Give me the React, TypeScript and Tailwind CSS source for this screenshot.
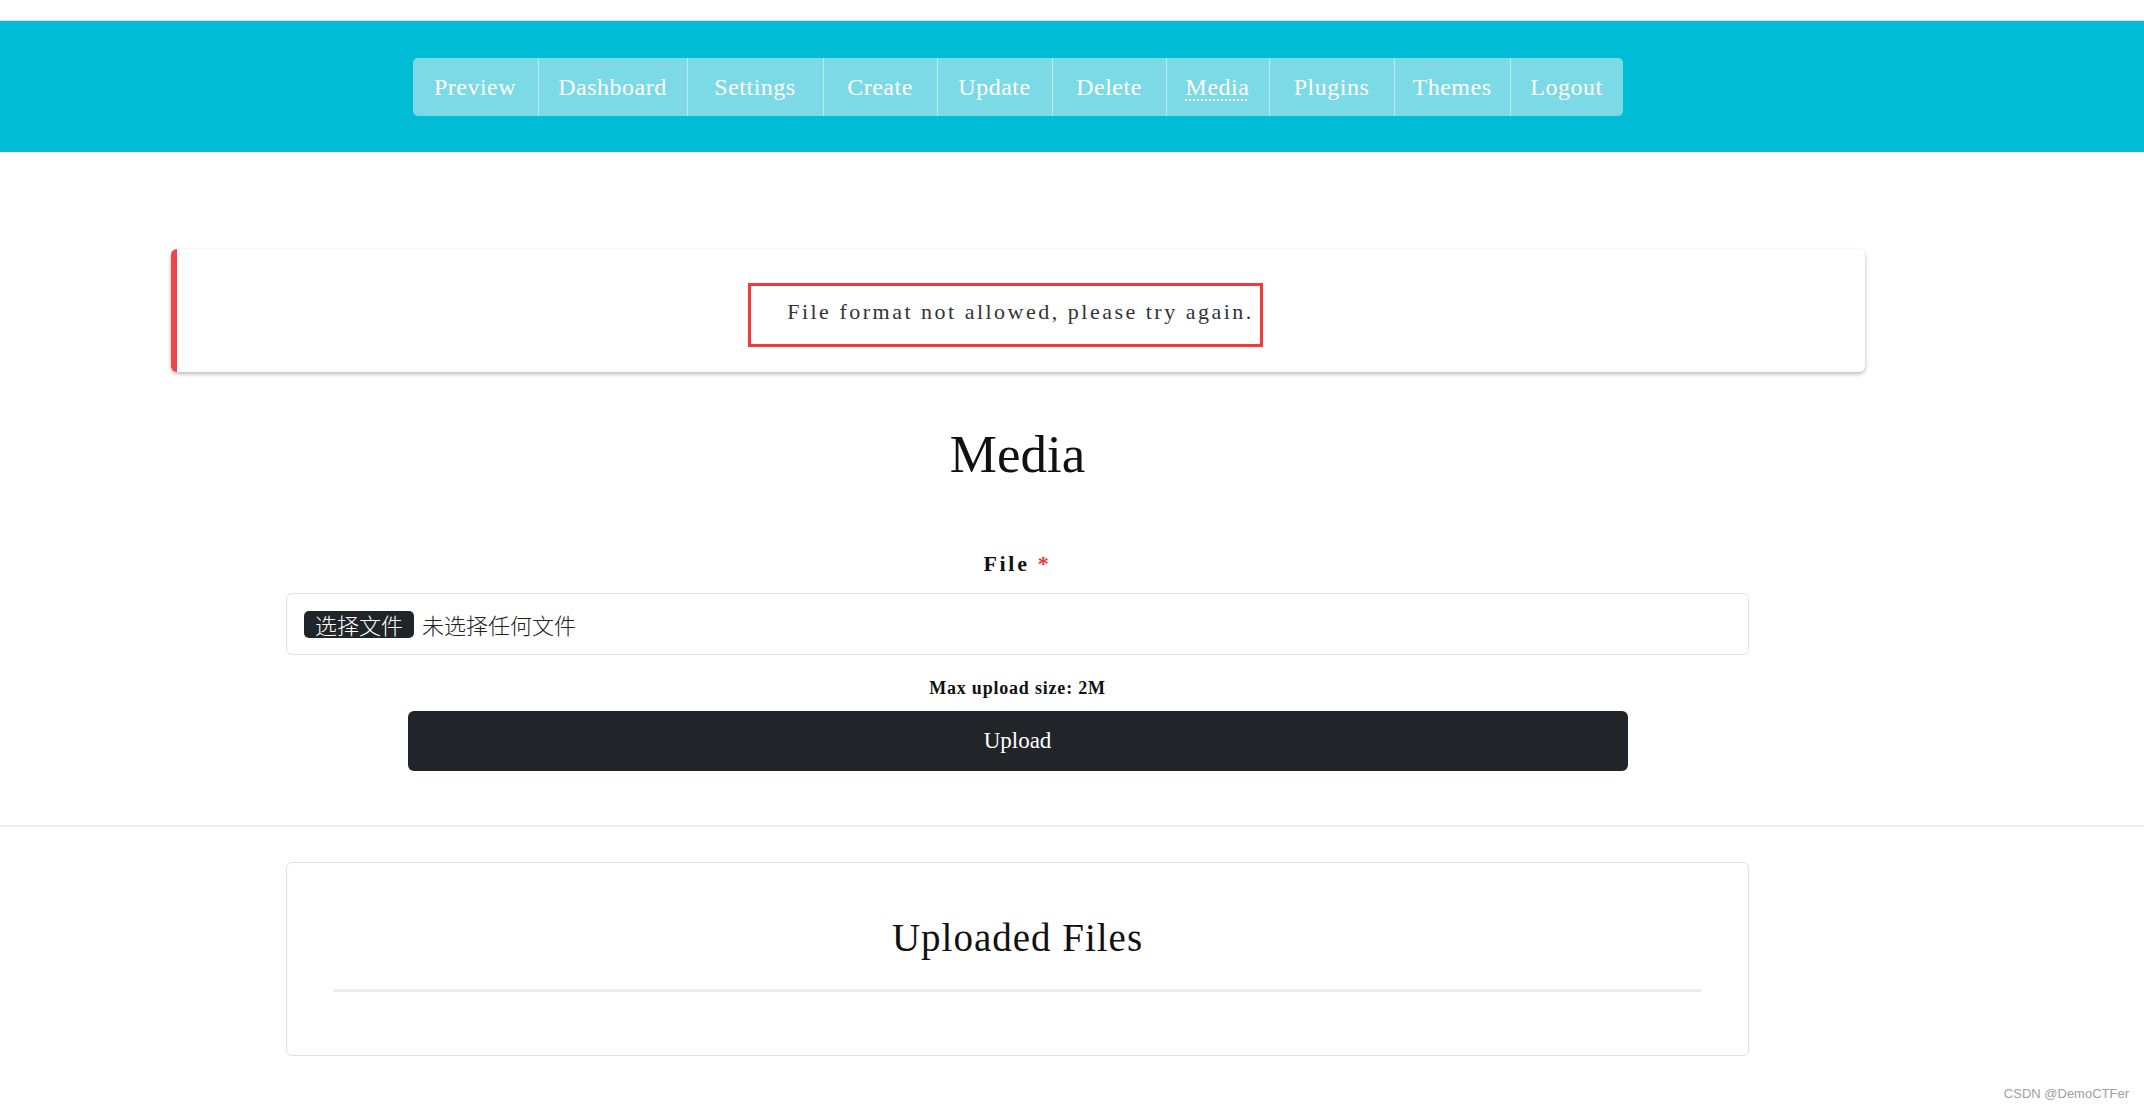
import React from 'react';

const navItems = [
  { label: 'Preview', w: 'w-[125px]' },
  { label: 'Dashboard', w: 'w-[149px]' },
  { label: 'Settings', w: 'w-[136px]' },
  { label: 'Create', w: 'w-[114px]' },
  { label: 'Update', w: 'w-[115px]' },
  { label: 'Delete', w: 'w-[114px]' },
  { label: 'Media', w: 'w-[103px]', active: true },
  { label: 'Plugins', w: 'w-[125px]' },
  { label: 'Themes', w: 'w-[116px]' },
  { label: 'Logout', w: 'w-[113px]' },
];

export default function App() {
  return (
    <div className="relative min-h-[1111px] bg-white font-['Liberation_Serif','Noto_Sans_CJK_SC',serif] text-[#212529]">
      <div className="h-[20px]" />

      {/* Top navigation */}
      <header className="flex h-[132px] items-center border-t border-[#dcdcdc] bg-[#00bcd4]">
        <div className="flex w-[2035px] justify-center">
          <nav className="flex h-[58px] overflow-hidden rounded-[5px] bg-[#7cd9e6]">
            {navItems.map((item, i) => (
              <a
                key={item.label}
                className={`flex h-full items-center justify-center text-[24px] tracking-[0.5px] text-white ${item.w} ${
                  i > 0 ? 'border-l border-[#b8ecf3]' : ''
                }`}
              >
                <span className={item.active ? 'underline decoration-dotted decoration-2 underline-offset-[5px]' : ''}>
                  {item.label}
                </span>
              </a>
            ))}
          </nav>
        </div>
      </header>

      <div className="flex w-[2035px] flex-col items-center">
        {/* Error alert */}
        <div className="mt-[97px] flex h-[123px] w-[1694px] items-center justify-center rounded-[6px] border-l-[6px] border-[#ef4545] bg-white shadow-[0_2px_4px_rgba(0,0,0,0.28)]">
          <span className="mr-[30px] mt-[9px] flex h-[64px] items-center border-[3px] border-[#f23a3a] pb-[6px] pl-[36px] pr-[6px] text-[22px] leading-none tracking-[2.5px] text-[#333]">
            File format not allowed, please try again.
          </span>
        </div>

        <h1 className="mt-[56px] text-[53px] leading-[53px] text-[#111]">Media</h1>

        <label className="mt-[72px] text-[22px] font-bold leading-[22px] tracking-[2.7px] text-[#111]">
          File <span className="text-[#e53935]">*</span>
        </label>

        {/* File input */}
        <div className="mt-[18px] flex h-[62px] w-[1463px] items-center rounded-[6px] border border-[#dee2e6] bg-white px-[17px]">
          <span className="flex h-[27px] w-[110px] items-center justify-center rounded-[5px] bg-[#212529] font-['Noto_Sans_CJK_SC',sans-serif] text-[22px] font-light leading-none text-white">
            选择文件
          </span>
          <span className="ml-[8px] font-['Noto_Sans_CJK_SC',sans-serif] text-[22px] font-light leading-none text-[#222]">
            未选择任何文件
          </span>
        </div>

        <p className="mt-[24px] text-[18px] font-bold leading-[18px] tracking-[0.8px] text-[#111]">Max upload size: 2M</p>

        <button className="mt-[14px] flex h-[60px] w-[1220px] items-center justify-center rounded-[6px] bg-[#212529] text-[23px] text-white">
          Upload
        </button>
      </div>

      <div className="mt-[54px] h-[2px] w-full bg-[#eeeeee]" />

      <div className="flex w-[2035px] justify-center">
        {/* Uploaded files card */}
        <div className="mt-[35px] flex w-[1463px] flex-col items-center rounded-[6px] border border-[#dee2e6] px-[46px] pb-[63px] pt-[55px]">
          <h2 className="text-[39px] leading-[39px] tracking-[1px] text-[#111]">Uploaded Files</h2>
          <div className="mt-[32px] h-[3px] w-full bg-[#eeeeee]" />
        </div>
      </div>

      <span className="absolute bottom-[8px] right-[15px] font-['Liberation_Sans',sans-serif] text-[13px] text-[#a0a0a0]">
        CSDN @DemoCTFer
      </span>
    </div>
  );
}
